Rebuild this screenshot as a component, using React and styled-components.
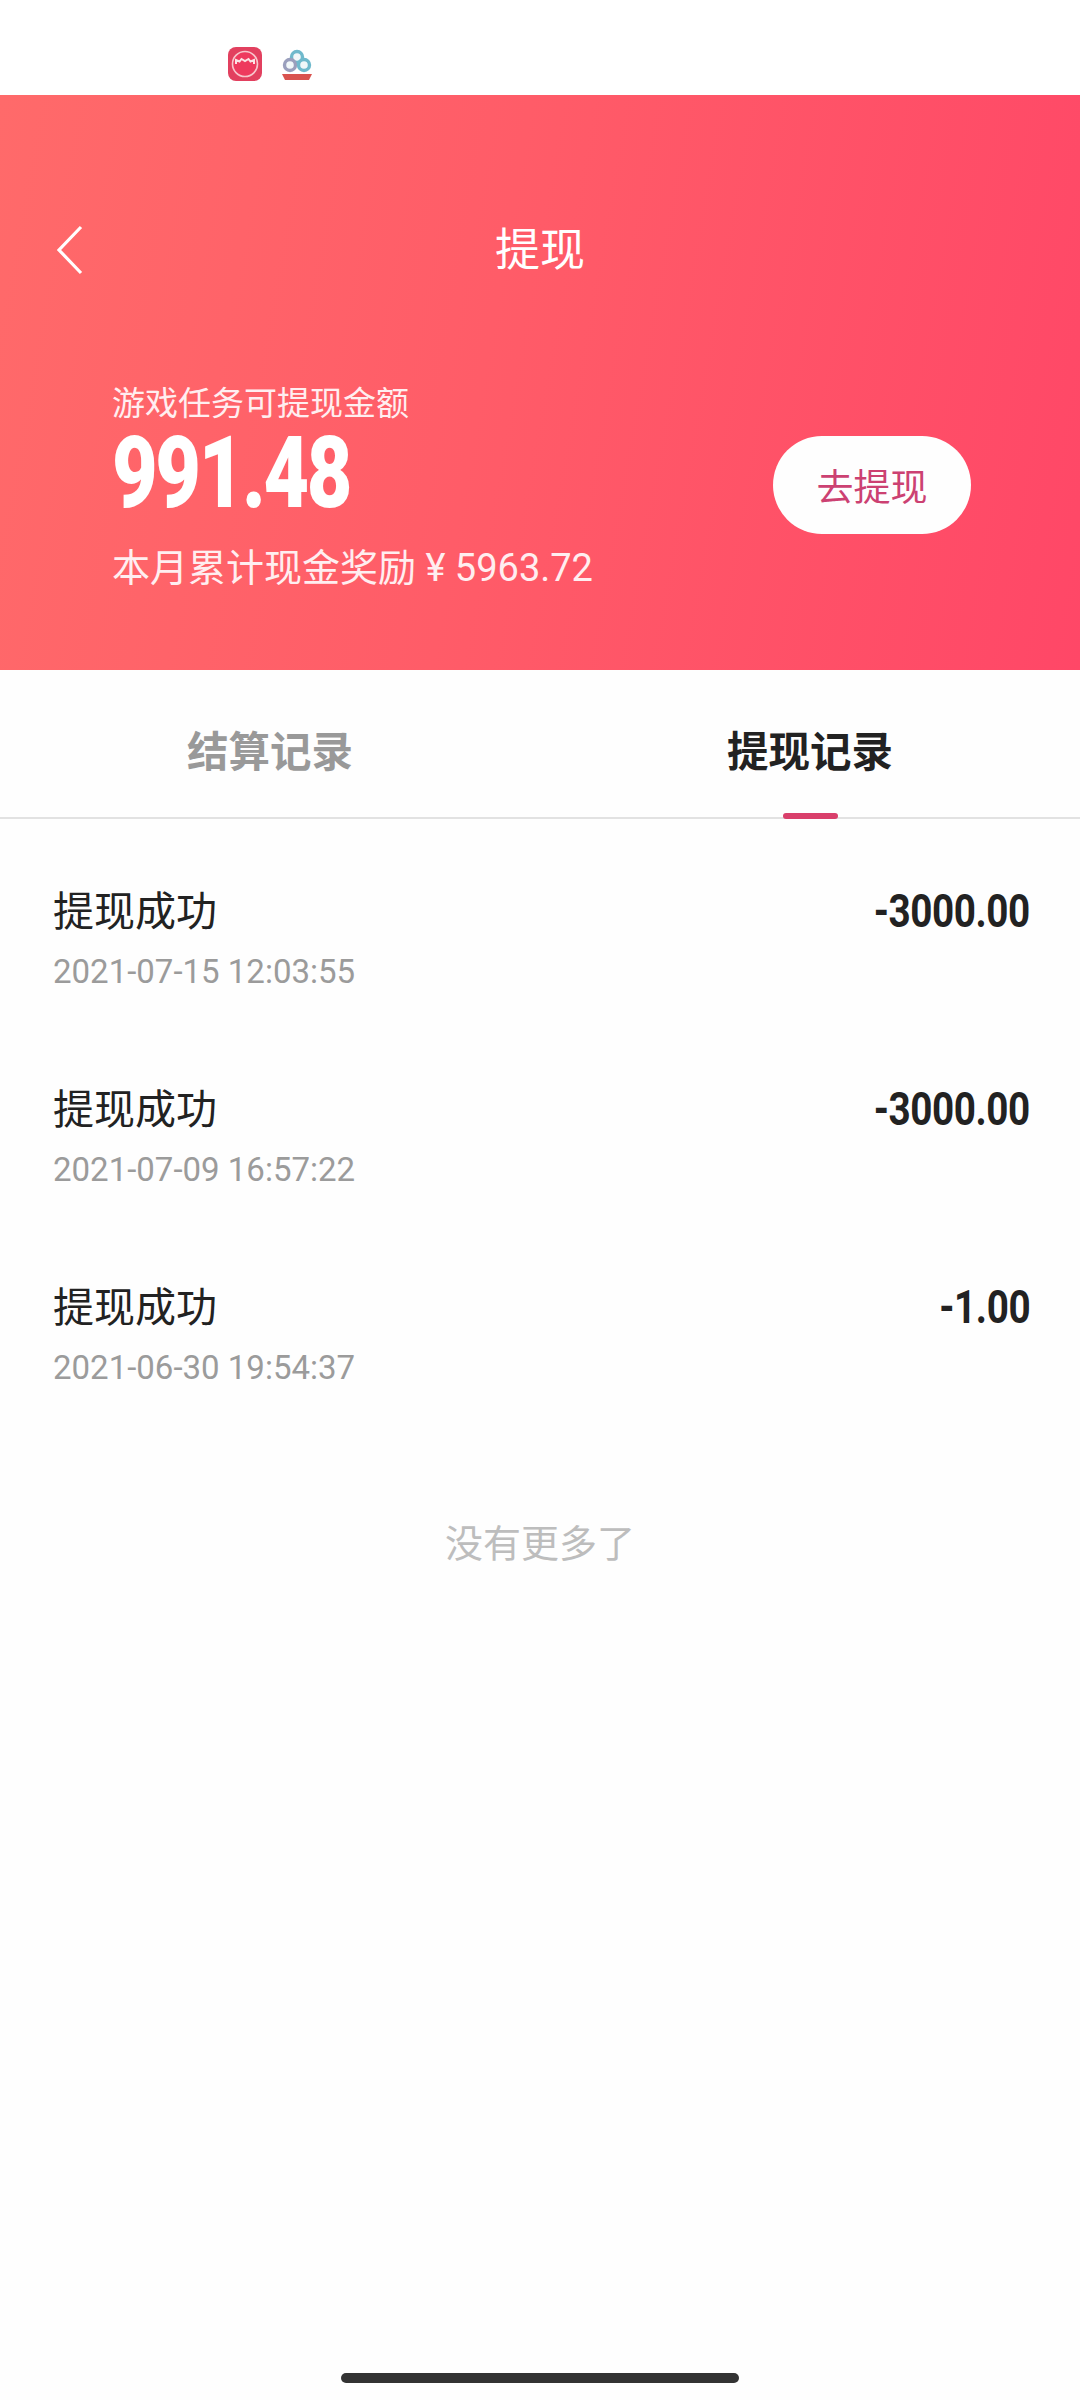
import React from 'react'
import styled, { createGlobalStyle } from 'styled-components'

const GlobalStyle = createGlobalStyle`
    html, body {
        margin: 0;
        padding: 0;
        background: #fefefe;
    }
    * {
        box-sizing: border-box;
    }
`

const records = [
    { title: '提现成功', time: '2021-07-15 12:03:55', amount: '-3000.00' },
    { title: '提现成功', time: '2021-07-09 16:57:22', amount: '-3000.00' },
    { title: '提现成功', time: '2021-06-30 19:54:37', amount: '-1.00' },
]

const AppIcon = () => (
    <svg width="36" height="36" viewBox="0 0 36 36">
        <rect x="1" y="1" width="34" height="34" rx="8" fill="#e2405f" />
        <circle cx="18" cy="18" r="12.5" fill="#ee3a5e" stroke="#f7c6cc" strokeWidth="1.6" />
        <path d="M9 18v-4l3.5 1.5 2-2.5 3.5 2 3.5-2 2 2.5L27 14v4" fill="none" stroke="#fbe3e5" strokeWidth="2" />
    </svg>
)

const CloudIcon = () => (
    <svg width="36" height="36" viewBox="0 0 36 36">
        <circle cx="18" cy="11" r="5.5" fill="#f1f7f9" stroke="#6fb9cc" strokeWidth="3.4" />
        <circle cx="11" cy="19" r="5.5" fill="#f1f7f9" stroke="#9a9fbd" strokeWidth="3.4" />
        <circle cx="25" cy="19" r="5.5" fill="#f1f7f9" stroke="#6fb9cc" strokeWidth="3.4" />
        <path d="M3 28h30l-3 6H6z" fill="#d9534f" />
    </svg>
)

const App = () => {
    return (
        <Page>
            <GlobalStyle />
            <StatusBar>
                <AppIcon />
                <CloudIcon />
            </StatusBar>

            <Banner>
                <NavBar>
                    <BackButton>
                        <svg width="28" height="50" viewBox="0 0 28 50">
                            <path d="M25 2L3 25l22 23" fill="none" stroke="#fff" strokeWidth="3.2" />
                        </svg>
                    </BackButton>
                    <NavTitle>提现</NavTitle>
                </NavBar>

                <Summary>
                    <div>
                        <SummaryLabel>游戏任务可提现金额</SummaryLabel>
                        <Balance>991.48</Balance>
                        <MonthTotal>本月累计现金奖励 ¥ 5963.72</MonthTotal>
                    </div>
                    <WithdrawButton>去提现</WithdrawButton>
                </Summary>
            </Banner>

            <Tabs>
                <Tab>结算记录</Tab>
                <Tab $active>提现记录</Tab>
            </Tabs>

            <RecordList>
                {records.map((item) => (
                    <Record key={item.time}>
                        <div>
                            <RecordTitle>{item.title}</RecordTitle>
                            <RecordTime>{item.time}</RecordTime>
                        </div>
                        <RecordAmount>{item.amount}</RecordAmount>
                    </Record>
                ))}
            </RecordList>

            <NoMore>没有更多了</NoMore>
            <HomeBar />
        </Page>
    )
}

export default App

const Page = styled.div`
    width: 1080px;
    height: 2400px;
    display: flex;
    flex-direction: column;
    overflow: hidden;
    background: #fefefe;
    font-family: "Noto Sans CJK SC", "Noto Sans", sans-serif;
`

const StatusBar = styled.div`
    height: 95px;
    padding: 46px 0 0 227px;
    display: flex;
    align-items: flex-start;
    gap: 16px;
    background: #fff;
`

const Banner = styled.header`
    height: 575px;
    padding: 0 109px 0 56px;
    background: linear-gradient(100deg, #ff6a6a 0%, #ff5c68 45%, #ff4767 100%);
    color: #fff;
`

const NavBar = styled.div`
    height: 110px;
    margin-top: 98px;
    position: relative;
    display: flex;
    align-items: flex-start;
`

const BackButton = styled.div`
    width: 28px;
    height: 50px;
    margin-top: 32px;
`

const NavTitle = styled.div`
    position: absolute;
    left: 439px;
    top: 20px;
    font-size: 45px;
    line-height: 68px;
`

const Summary = styled.div`
    display: flex;
    align-items: center;
    justify-content: space-between;
    padding-left: 56px;
    padding-top: 73px;
`

const SummaryLabel = styled.div`
    margin-top: 3px;
    font-size: 33px;
    line-height: 44px;
    color: #ffeef0;
`

const Balance = styled.div`
    margin-top: 3px;
    font-family: "Roboto", sans-serif;
    font-weight: 900;
    font-size: 101px;
    line-height: 94px;
    letter-spacing: -3px;
    transform: scaleX(0.78);
    transform-origin: left center;
`

const MonthTotal = styled.div`
    margin-top: 22px;
    font-family: "Roboto", "Noto Sans CJK SC", sans-serif;
    font-size: 38px;
    line-height: 52px;
    color: #ffeef0;
`

const WithdrawButton = styled.div`
    width: 198px;
    height: 98px;
    border-radius: 49px;
    background: #fefefe;
    color: #cc4172;
    font-size: 37px;
    display: flex;
    align-items: center;
    justify-content: center;
`

const Tabs = styled.nav`
    height: 149px;
    display: grid;
    grid-template-columns: 1fr 1fr;
    border-bottom: 2px solid #e2e2e2;
`

const Tab = styled.div`
    position: relative;
    display: flex;
    align-items: center;
    justify-content: center;
    padding-top: 11px;
    font-size: 41.5px;
    font-weight: 700;
    color: ${(p) => (p.$active ? '#222' : '#999')};

    &::after {
        content: '';
        display: ${(p) => (p.$active ? 'block' : 'none')};
        position: absolute;
        left: 243px;
        bottom: -2px;
        width: 55px;
        height: 6px;
        border-radius: 3px;
        background: #d93f6b;
    }
`

const RecordList = styled.div`
    padding: 54px 50px 0 53px;
    display: flex;
    flex-direction: column;
    gap: 76px;
`

const Record = styled.div`
    height: 122px;
    display: flex;
    justify-content: space-between;
    align-items: flex-start;
`

const RecordTitle = styled.div`
    font-size: 41px;
    line-height: 70px;
    color: #222;
`

const RecordTime = styled.div`
    margin-top: 3px;
    font-family: "Roboto", sans-serif;
    font-size: 33px;
    line-height: 52px;
    color: #9b9b9b;
`

const RecordAmount = styled.div`
    margin-top: 3px;
    font-family: "Roboto", sans-serif;
    font-weight: 700;
    font-size: 46px;
    line-height: 70px;
    letter-spacing: -0.5px;
    color: #222;
    transform: scaleX(0.84);
    transform-origin: right center;
`

const NoMore = styled.div`
    margin-top: 122px;
    text-align: center;
    font-size: 38px;
    line-height: 56px;
    color: #bdbdbd;
`

const HomeBar = styled.div`
    width: 398px;
    height: 10px;
    margin: auto auto 17px;
    border-radius: 5px;
    background: #333;
`
